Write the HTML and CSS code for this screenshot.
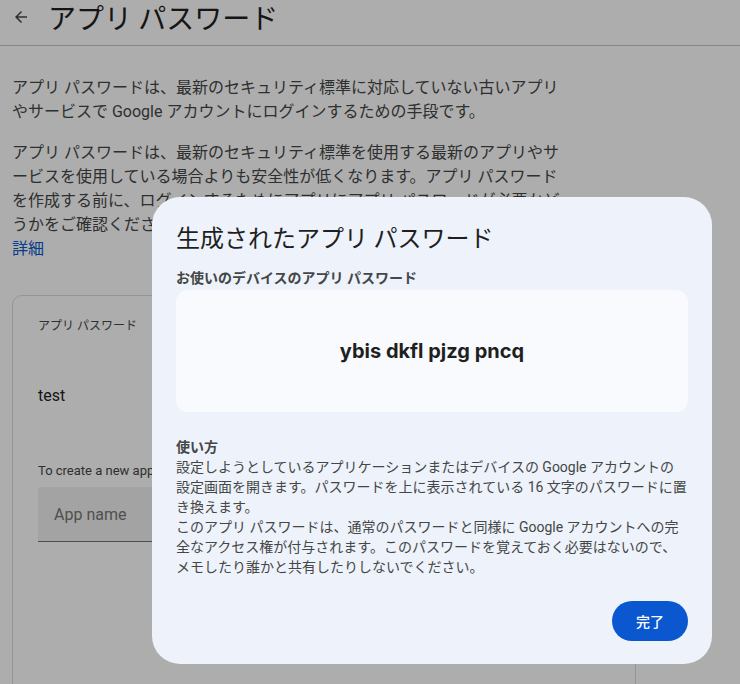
FILE: index.html
```html
<!DOCTYPE html>
<html lang="ja">
<head>
<meta charset="UTF-8" />
<meta name="viewport" content="width=device-width, initial-scale=1" />
<title>アプリ パスワード</title>
<link rel="stylesheet" href="styles.css">
</head>
<body>
  <header class="page-header">
    <a class="back" href="#" aria-label="戻る">
      <svg viewBox="0 0 24 24" width="18" height="18" aria-hidden="true">
        <path d="M20 11H7.83l5.59-5.59L12 4l-8 8 8 8 1.41-1.41L7.83 13H20v-2z" fill="currentColor"/>
      </svg>
    </a>
    <h1 class="page-title">アプリ パスワード</h1>
  </header>

  <main class="content">
    <p class="intro">アプリ パスワードは、最新のセキュリティ標準に対応していない古いアプリやサービスで Google アカウントにログインするための手段です。</p>
    <p class="intro">アプリ パスワードは、最新のセキュリティ標準を使用する最新のアプリやサービスを使用している場合よりも安全性が低くなります。アプリ パスワードを作成する前に、ログインするためにアプリにアプリ パスワードが必要かどうかをご確認ください。<br><a class="link" href="#">詳細</a></p>

    <section class="card">
      <div class="card-label">アプリ パスワード</div>
      <div class="app-row">test</div>
      <div class="hint">To create a new app specific password, type a name for it below...</div>
      <div class="field">App name</div>
    </section>
  </main>

  <!-- modal -->
  <div class="scrim"></div>
  <div class="dialog" role="dialog" aria-modal="true" aria-labelledby="dlg-title">
    <h2 class="dialog-title" id="dlg-title">生成されたアプリ パスワード</h2>
    <div class="dialog-sub">お使いのデバイスのアプリ パスワード</div>
    <div class="pw-box">
      <span class="pw">ybis dkfl pjzg pncq</span>
    </div>
    <div class="howto">
      <div class="howto-head">使い方</div>
      <p>設定しようとしているアプリケーションまたはデバイスの Google アカウントの設定画面を開きます。パスワードを上に表示されている 16 文字のパスワードに置き換えます。</p>
      <p>このアプリ パスワードは、通常のパスワードと同様に Google アカウントへの完全なアクセス権が付与されます。このパスワードを覚えておく必要はないので、メモしたり誰かと共有したりしないでください。</p>
    </div>
    <div class="dialog-actions">
      <button class="btn-done">完了</button>
    </div>
  </div>
</body>
</html>
```

FILE: styles.css
```css
* {
  box-sizing: border-box;
}
body {
  margin: 0;
  background: #ffffff;
  font-family: Roboto, "Noto Sans CJK JP", sans-serif;
  color: #444746;
  overflow: hidden;
}

/* Header */
.page-header {
  display: flex;
  align-items: center;
  gap: 18px;
  padding: 0 12px 11px;
  border-bottom: 1px solid #c4c7c5;
}
.back {
  display: flex;
  color: #444746;
}
.page-title {
  margin: 0;
  font-family: "Noto Sans CJK JP", sans-serif;
  font-size: 28px;
  font-weight: 400;
  line-height: 34px;
  color: #1f1f1f;
}

/* Main */
.content {
  padding: 30px 12px 0;
}
.intro {
  max-width: 556px;
  margin: 0 0 17px;
  font-size: 16px;
  line-height: 24px;
}
.intro:last-of-type {
  margin-bottom: 34px;
}
.link {
  color: #0b57d0;
  text-decoration: none;
}

.card {
  width: 624px;
  min-height: 500px;
  padding: 22px 25px;
  border: 1px solid #dadce0;
  border-radius: 10px;
}
.card-label {
  font-size: 12px;
  line-height: 16px;
  color: #444746;
}
.app-row {
  margin-top: 50px;
  font-size: 16px;
  line-height: 24px;
  color: #1f1f1f;
}
.hint {
  margin-top: 53px;
  font-size: 13px;
  line-height: 20px;
  white-space: nowrap;
}
.field {
  margin-top: 6px;
  height: 55px;
  padding: 0 16px;
  display: flex;
  align-items: center;
  background: #f0f0f0;
  border-radius: 4px 4px 0 0;
  border-bottom: 1px solid #747775;
  font-size: 16px;
  color: #747775;
}

/* Modal */
.scrim {
  position: fixed;
  inset: 0;
  background: rgba(0, 0, 0, 0.32);
}
.dialog {
  position: fixed;
  left: 152px;
  top: 197px;
  width: 560px;
  padding: 24px 24px 23px;
  background: #eef2fa;
  border-radius: 28px;
  color: #1f1f1f;
  font-family: Roboto, "Noto Sans CJK JP", sans-serif;
}
.dialog-title {
  margin: 0;
  font-family: "Noto Sans CJK JP", sans-serif;
  font-size: 24px;
  font-weight: 400;
  line-height: 32px;
}
.dialog-sub {
  margin-top: 15px;
  font-size: 14px;
  font-weight: 700;
  line-height: 20px;
  color: #444746;
}
.pw-box {
  margin-top: 2px;
  height: 122px;
  display: flex;
  align-items: center;
  justify-content: center;
  background: #f8fafd;
  border-radius: 12px;
}
.pw {
  font-family: Inter, sans-serif;
  font-size: 20px;
  font-weight: 700;
  color: #1f1f1f;
}
.howto {
  margin-top: 25px;
  font-size: 14px;
  line-height: 20px;
  color: #444746;
}
.howto-head {
  font-weight: 700;
}
.howto p {
  margin: 0;
}
.dialog-actions {
  display: flex;
  justify-content: flex-end;
  margin-top: 24px;
}
.btn-done {
  width: 76px;
  height: 40px;
  border: none;
  border-radius: 20px;
  background: #0b57d0;
  color: #ffffff;
  font-family: Roboto, "Noto Sans CJK JP", sans-serif;
  font-size: 14px;
  font-weight: 500;
  cursor: pointer;
}
```
